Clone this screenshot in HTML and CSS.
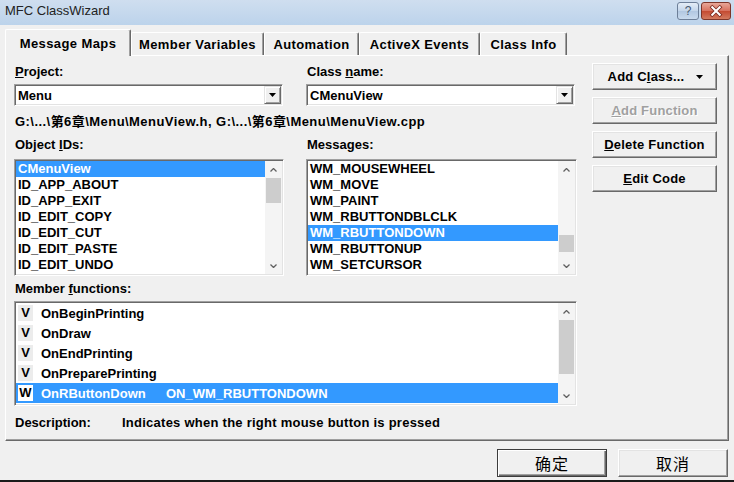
FILE: index.html
```html
<!DOCTYPE html>
<html lang="en">
<head>
    <meta charset="UTF-8">
    <title>MFC ClassWizard</title>
    <link rel="stylesheet" href="styles.css">
</head>
<body>
<div id="window">

    <!-- ==== caption ==== -->
    <div class="titlebar">
        <span class="title">MFC ClassWizard</span>
        <span class="cap-btn help">?</span>
        <span class="cap-btn close">
            <svg width="30" height="18" viewBox="0 0 30 18"><path d="M11 5 L19 13 M19 5 L11 13" stroke="#7a2a20" stroke-width="4" stroke-linecap="square"/><path d="M11 5 L19 13 M19 5 L11 13" stroke="#fff" stroke-width="2.2" stroke-linecap="square"/></svg>
        </span>
    </div>

    <!-- ==== tabs ==== -->
    <div class="tabs">
        <div class="tab active tab-maps">Message Maps</div>
        <div class="tab tab-vars">Member Variables</div>
        <div class="tab tab-auto">Automation</div>
        <div class="tab tab-activex">ActiveX Events</div>
        <div class="tab tab-info">Class Info</div>
    </div>

    <div class="panel">
        <div class="form">

            <div class="row">
                <div class="col col-left">
                    <div class="label"><u>P</u>roject:</div>
                    <div class="combo">
                        <span class="combo-text">Menu</span>
                        <span class="drop"><svg width="7" height="4" viewBox="0 0 7 4"><path d="M0 0 H7 L3.5 4 Z" fill="#000"/></svg></span>
                    </div>
                </div>
                <div class="col col-right">
                    <div class="label">Class <u>n</u>ame:</div>
                    <div class="combo">
                        <span class="combo-text">CMenuView</span>
                        <span class="drop"><svg width="7" height="4" viewBox="0 0 7 4"><path d="M0 0 H7 L3.5 4 Z" fill="#000"/></svg></span>
                    </div>
                </div>
            </div>

            <div class="path">G:\...\第6章\Menu\MenuView.h, G:\...\第6章\Menu\MenuView.cpp</div>

            <div class="row row-lists">
                <div class="col col-left">
                    <div class="label">Object <u>I</u>Ds:</div>
                    <div class="listbox lb-small">
                        <div class="items">
                            <div class="item sel">CMenuView</div>
                            <div class="item">ID_APP_ABOUT</div>
                            <div class="item">ID_APP_EXIT</div>
                            <div class="item">ID_EDIT_COPY</div>
                            <div class="item">ID_EDIT_CUT</div>
                            <div class="item">ID_EDIT_PASTE</div>
                            <div class="item">ID_EDIT_UNDO</div>
                        </div>
                        <div class="vscroll">
                            <div class="arrow"><svg width="7" height="4" viewBox="0 0 7 4"><path d="M0.5 3.5 L3.5 0.5 L6.5 3.5" fill="none" stroke="#606060" stroke-width="1.3"/></svg></div>
                            <div class="track"><div class="thumb thumb-ids"></div></div>
                            <div class="arrow"><svg width="7" height="4" viewBox="0 0 7 4"><path d="M0.5 0.5 L3.5 3.5 L6.5 0.5" fill="none" stroke="#606060" stroke-width="1.3"/></svg></div>
                        </div>
                    </div>
                </div>
                <div class="col col-right">
                    <div class="label">Messa<u>g</u>es:</div>
                    <div class="listbox lb-small">
                        <div class="items">
                            <div class="item">WM_MOUSEWHEEL</div>
                            <div class="item">WM_MOVE</div>
                            <div class="item">WM_PAINT</div>
                            <div class="item">WM_RBUTTONDBLCLK</div>
                            <div class="item sel">WM_RBUTTONDOWN</div>
                            <div class="item">WM_RBUTTONUP</div>
                            <div class="item">WM_SETCURSOR</div>
                        </div>
                        <div class="vscroll">
                            <div class="arrow"><svg width="7" height="4" viewBox="0 0 7 4"><path d="M0.5 3.5 L3.5 0.5 L6.5 3.5" fill="none" stroke="#606060" stroke-width="1.3"/></svg></div>
                            <div class="track"><div class="thumb thumb-msgs"></div></div>
                            <div class="arrow"><svg width="7" height="4" viewBox="0 0 7 4"><path d="M0.5 0.5 L3.5 3.5 L6.5 0.5" fill="none" stroke="#606060" stroke-width="1.3"/></svg></div>
                        </div>
                    </div>
                </div>
            </div>

            <div class="label label-members">Member <u>f</u>unctions:</div>
            <div class="listbox lb-members">
                <div class="items">
                    <div class="mrow"><span class="glyph">V</span><span class="fname">OnBeginPrinting</span></div>
                    <div class="mrow"><span class="glyph">V</span><span class="fname">OnDraw</span></div>
                    <div class="mrow"><span class="glyph">V</span><span class="fname">OnEndPrinting</span></div>
                    <div class="mrow"><span class="glyph">V</span><span class="fname">OnPreparePrinting</span></div>
                    <div class="mrow sel"><span class="glyph">W</span><span class="fname">OnRButtonDown</span><span class="fmsg">ON_WM_RBUTTONDOWN</span></div>
                </div>
                <div class="vscroll">
                    <div class="arrow"><svg width="7" height="4" viewBox="0 0 7 4"><path d="M0.5 3.5 L3.5 0.5 L6.5 3.5" fill="none" stroke="#606060" stroke-width="1.3"/></svg></div>
                    <div class="track"><div class="thumb thumb-members"></div></div>
                    <div class="arrow"><svg width="7" height="4" viewBox="0 0 7 4"><path d="M0.5 0.5 L3.5 3.5 L6.5 0.5" fill="none" stroke="#606060" stroke-width="1.3"/></svg></div>
                </div>
            </div>

            <div class="desc">
                <span class="desc-label">Description:</span>
                <span class="desc-text">Indicates when the right mouse button is pressed</span>
            </div>
        </div>

        <div class="side">
            <div class="btn btn-addclass">
                <span>Add C<u>l</u>ass...</span>
                <svg width="7" height="4" viewBox="0 0 7 4"><path d="M0 0 H7 L3.5 4 Z" fill="#000"/></svg>
            </div>
            <div class="btn disabled"><span><u>A</u>dd Function</span></div>
            <div class="btn"><span><u>D</u>elete Function</span></div>
            <div class="btn"><span><u>E</u>dit Code</span></div>
        </div>
    </div>

    <!-- ==== dialog buttons ==== -->
    <div class="footer">
        <div class="fbtn default">确定</div>
        <div class="fbtn">取消</div>
    </div>
</div>
</body>
</html>
```

FILE: styles.css
```css
* {
    box-sizing: border-box;
}

body {
    margin: 0;
    background: #f0f0f0;
    font-family: "Liberation Sans", "Noto Sans CJK SC", sans-serif;
    font-size: 13px;
    font-weight: bold;
    color: #000;
}

#window {
    width: 734px;
    height: 482px;
    overflow: hidden;
    background: #f0f0f0;
    border-bottom: 2px solid #1a1a1a;
}

/* ==== caption ==== */

.titlebar {
    height: 25px;
    display: flex;
    align-items: flex-start;
    padding: 2px 3px 0 5px;
    background: linear-gradient(#cfdeef, #bcd3eb);
}

.title {
    flex: 1;
    font-weight: normal;
    font-size: 13px;
    line-height: 18px;
    color: #222;
}

.cap-btn {
    height: 18px;
    display: flex;
    align-items: center;
    justify-content: center;
    border: 1px solid #6d7f98;
    border-radius: 3px;
}

.help {
    width: 22px;
    margin-right: 2px;
    background: linear-gradient(#e4edf7, #c3d5ea 50%, #b1c7e1 51%, #c9dbee);
    font-weight: normal;
    font-size: 12px;
    color: #45576e;
}

.close {
    width: 30px;
    border-color: #7d3529;
    background: linear-gradient(#e8a799, #d7705d 50%, #c44a31 51%, #d27a5f);
}

/* ==== tabs ==== */

.tabs {
    height: 30px;
    display: flex;
    align-items: flex-end;
    padding-left: 5px;
    position: relative;
    z-index: 1;
}

.tab {
    height: 23px;
    display: flex;
    align-items: center;
    justify-content: center;
    letter-spacing: 0.4px;
    background: #f0f0f0;
    border-top: 1px solid #fff;
    border-left: 1px solid #fff;
    border-right: 1px solid #696969;
    box-shadow: inset -1px 0 0 #a0a0a0;
    border-radius: 2px 2px 0 0;
    padding-top: 1px;
}

.tab.active {
    height: 27px;
    margin-bottom: -1px;
    padding-top: 0;
}

.tab-maps { width: 126px; }
.tab-vars { width: 133px; }
.tab-auto { width: 95px; }
.tab-activex { width: 121px; }
.tab-info { width: 87px; }

.panel {
    width: 724px;
    height: 386px;
    margin-left: 5px;
    display: flex;
    padding: 8px 0 0 8px;
    border: 1px solid;
    border-color: #fff #696969 #696969 #fff;
    box-shadow: inset -1px -1px 0 #a0a0a0;
}

/* ==== form ==== */

.form {
    width: 563px;
}

.row {
    display: flex;
    gap: 22px;
}

.col-left { width: 270px; }
.col-right { width: 271px; }

.label {
    line-height: 16px;
    height: 16px;
    padding-left: 1px;
}

.combo {
    width: 269px;
    height: 22px;
    margin-top: 4px;
    display: flex;
    align-items: center;
    background: #fff;
    border: 1px solid;
    border-color: #a0a0a0 #fff #fff #a0a0a0;
    box-shadow: inset 1px 1px 0 #696969, inset -1px -1px 0 #e3e3e3;
    padding: 1px 1px 1px 3px;
}

.combo-text {
    flex: 1;
}

.drop {
    width: 17px;
    height: 18px;
    display: flex;
    align-items: center;
    justify-content: center;
    background: #f0f0f0;
    border: 1px solid;
    border-color: #e3e3e3 #696969 #696969 #e3e3e3;
    box-shadow: inset 1px 1px 0 #fff, inset -1px -1px 0 #a0a0a0;
}

.path {
    margin-top: 8px;
    line-height: 16px;
    height: 16px;
    padding-left: 1px;
    letter-spacing: 0.45px;
    white-space: nowrap;
}

.row-lists {
    margin-top: 7px;
}

.listbox {
    margin-top: 6px;
    display: flex;
    background: #fff;
    border: 1px solid;
    border-color: #a0a0a0 #fff #fff #a0a0a0;
    box-shadow: inset 1px 1px 0 #696969, inset -1px -1px 0 #e3e3e3;
    padding: 1px;
}

.lb-small {
    height: 117px;
}

.lb-members {
    height: 105px;
    margin-top: 4px;
}

.items {
    flex: 1;
}

.item {
    height: 16px;
    line-height: 16px;
    padding-left: 2px;
    white-space: nowrap;
}

.sel {
    background: #3399ff;
    color: #fff;
}

.label-members {
    margin-top: 5px;
}

.mrow {
    height: 20px;
    display: flex;
    align-items: center;
    padding-left: 2px;
    white-space: nowrap;
}

.glyph {
    width: 15px;
    height: 16px;
    line-height: 16px;
    text-align: center;
    background: #ececec;
    color: #000;
    margin-right: 8px;
}

.mrow.sel .glyph {
    background: #fff;
}

.fname {
    width: 125px;
}

/* ==== scroll bars ==== */

.vscroll {
    width: 17px;
    display: flex;
    flex-direction: column;
    background: #f4f4f4;
}

.arrow {
    height: 17px;
    display: flex;
    align-items: center;
    justify-content: center;
}

.track {
    flex: 1;
}

.thumb {
    margin: 0 1px;
    background: #cdcdcd;
}

.thumb-ids { height: 25px; }
.thumb-msgs { height: 17px; margin-top: 57px; }
.thumb-members { height: 54px; }

.desc {
    margin-top: 9px;
    display: flex;
    line-height: 16px;
    padding-left: 1px;
}

.desc-label {
    width: 107px;
}

.desc-text {
    letter-spacing: 0.25px;
}

/* ==== buttons ==== */

.side {
    width: 125px;
    margin-left: 15px;
    margin-top: -1px;
    display: flex;
    flex-direction: column;
    gap: 7px;
}

.btn {
    height: 27px;
    display: flex;
    align-items: center;
    justify-content: center;
    letter-spacing: 0.2px;
    background: #f0f0f0;
    border: 1px solid;
    border-color: #fff #696969 #696969 #fff;
    box-shadow: inset -1px -1px 0 #a0a0a0, inset 1px 1px 0 #e3e3e3;
}

.btn-addclass {
    gap: 12px;
    padding-left: 2px;
}

.btn.disabled {
    color: #a0a0a0;
    text-shadow: 1px 1px 0 #fff;
}

.footer {
    display: flex;
    justify-content: flex-end;
    gap: 11px;
    padding: 8px 6px 0 0;
}

.fbtn {
    width: 110px;
    height: 28px;
    display: flex;
    align-items: center;
    justify-content: center;
    font-family: "Noto Sans CJK SC", sans-serif;
    font-weight: normal;
    font-size: 16px;
    letter-spacing: 1px;
    background: #f0f0f0;
    border: 1px solid;
    border-color: #fff #696969 #696969 #fff;
    box-shadow: inset -1px -1px 0 #a0a0a0, inset 1px 1px 0 #e3e3e3;
}

.fbtn.default {
    border-color: #3c3c3c;
    box-shadow: inset 1px 1px 0 #fff, inset -1px -1px 0 #696969, inset -2px -2px 0 #a0a0a0;
}
```
